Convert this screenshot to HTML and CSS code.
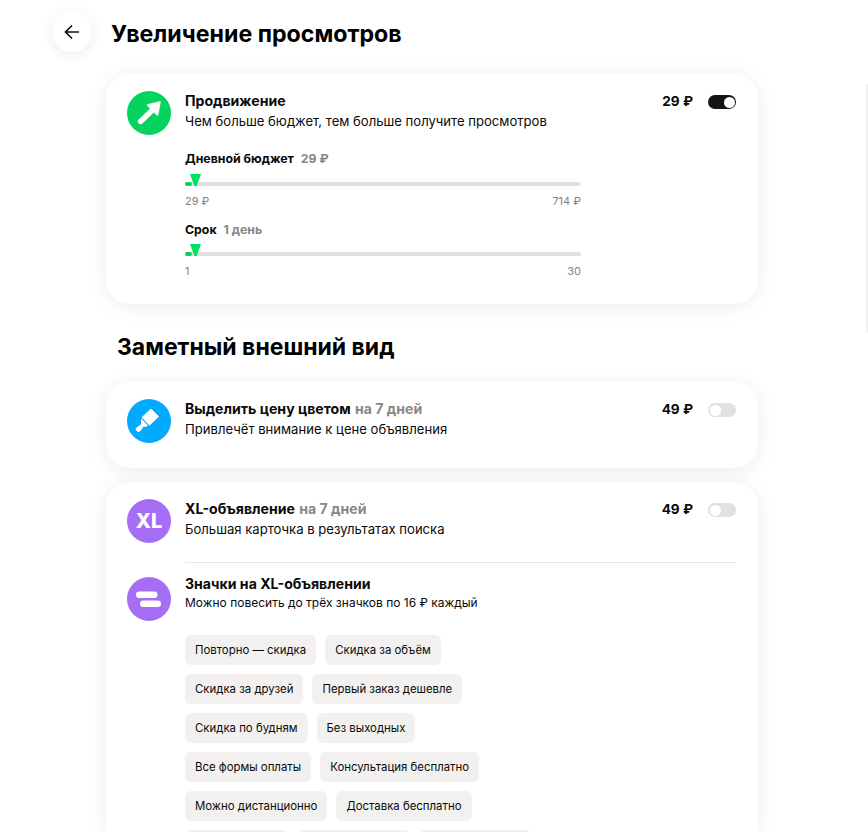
FILE: index.html
```html
<!DOCTYPE html>
<html lang="ru">
<head>
    <meta charset="utf-8">
    <title>Увеличение просмотров</title>
    <link rel="stylesheet" href="styles.css">
</head>
<body>
    <div class="next-card"></div>
    <div class="page">
        <div class="top">
            <button class="back">
                <svg width="18" height="18" viewBox="0 0 18 18" fill="none" stroke="#111" stroke-width="1.7">
                    <path d="M16 9H2.5M9 2.5L2.5 9L9 15.5"/>
                </svg>
            </button>
            <h1 class="title">Увеличение просмотров</h1>
        </div>

        <div class="card card-promo">
            <div class="row">
                <div class="icon icon-green">
                    <svg width="44" height="44" viewBox="0 0 44 44" fill="none">
                        <path d="M13.5 30.5L26 18.5" stroke="#fff" stroke-width="5.4" stroke-linecap="round"/>
                        <path d="M20.5 14L33 11L30.5 24Z" fill="#fff" stroke="#fff" stroke-width="1.5" stroke-linejoin="round"/>
                    </svg>
                </div>
                <div class="info">
                    <div class="name">Продвижение</div>
                    <div class="desc">Чем больше бюджет, тем больше получите просмотров</div>
                </div>
                <div class="price">29 ₽</div>
                <div class="toggle toggle-on"><span class="knob"></span></div>
            </div>

            <div class="slider">
                <div class="slider-label">Дневной бюджет <span class="muted slider-value">29 ₽</span></div>
                <div class="track"><span class="fill"></span><span class="thumb"></span></div>
                <div class="limits"><span>29 ₽</span><span>714 ₽</span></div>
            </div>
            <div class="slider">
                <div class="slider-label">Срок <span class="muted slider-value">1 день</span></div>
                <div class="track"><span class="fill"></span><span class="thumb"></span></div>
                <div class="limits"><span>1</span><span>30</span></div>
            </div>
        </div>

        <h2 class="subtitle">Заметный внешний вид</h2>

        <div class="card card-color">
            <div class="row">
                <div class="icon icon-blue">
                    <svg width="44" height="44" viewBox="0 0 44 44" fill="#fff">
                        <path d="M24 10L31.5 17.5L22.5 26L15 18.5Z" stroke="#fff" stroke-linejoin="round"/>
                        <path d="M14.5 20.5L20.5 26.5L18.5 27.5L16.5 27L13 32C11 33.5 8 31 9.5 29L14.5 25.5Z" stroke="#fff" stroke-linejoin="round"/>
                    </svg>
                </div>
                <div class="info">
                    <div class="name">Выделить цену цветом <span class="muted">на 7 дней</span></div>
                    <div class="desc">Привлечёт внимание к цене объявления</div>
                </div>
                <div class="price">49 ₽</div>
                <div class="toggle"><span class="knob"></span></div>
            </div>
        </div>

        <div class="card card-xl">
            <div class="row">
                <div class="icon icon-purple icon-text">XL</div>
                <div class="info">
                    <div class="name">XL-объявление <span class="muted">на 7 дней</span></div>
                    <div class="desc">Большая карточка в результатах поиска</div>
                </div>
                <div class="price">49 ₽</div>
                <div class="toggle"><span class="knob"></span></div>
            </div>
            <div class="divider"></div>
            <div class="row">
                <div class="icon icon-purple icon-low">
                    <svg width="44" height="44" viewBox="0 0 44 44" fill="#fff">
                        <rect x="9" y="14.5" width="21.5" height="6.5" rx="3.2"/>
                        <rect x="13" y="23.5" width="21" height="6.5" rx="3.2"/>
                    </svg>
                </div>
                <div class="info">
                    <div class="name">Значки на XL-объявлении</div>
                    <div class="desc desc-tight">Можно повесить до трёх значков по 16 ₽ каждый</div>
                </div>
            </div>
            <div class="chips">
                <div class="chip-row">
                    <span class="chip">Повторно — скидка</span>
                    <span class="chip">Скидка за объём</span>
                </div>
                <div class="chip-row">
                    <span class="chip">Скидка за друзей</span>
                    <span class="chip">Первый заказ дешевле</span>
                </div>
                <div class="chip-row">
                    <span class="chip">Скидка по будням</span>
                    <span class="chip">Без выходных</span>
                </div>
                <div class="chip-row">
                    <span class="chip">Все формы оплаты</span>
                    <span class="chip">Консультация бесплатно</span>
                </div>
                <div class="chip-row">
                    <span class="chip">Можно дистанционно</span>
                    <span class="chip">Доставка бесплатно</span>
                </div>
                <div class="chip-row">
                    <span class="chip chip-cut"></span>
                    <span class="chip chip-cut"></span>
                    <span class="chip chip-cut"></span>
                </div>
            </div>
        </div>
    </div>
</body>
</html>
```

FILE: styles.css
```css
html, body {
    margin: 0;
    height: 832px;
    overflow: hidden;
    background: #fff;
}
body {
    font-family: Inter, "Noto Sans", sans-serif;
    color: #0a0a0a;
    font-size: 13px;
}
.page {
    padding: 12px 0 0 52px;
}
.top {
    display: flex;
    gap: 19px;
}
.back {
    width: 40px;
    height: 40px;
    padding: 0;
    border: none;
    border-radius: 50%;
    background: #fff;
    box-shadow: 0 2px 14px rgba(0, 0, 0, 0.08);
    display: flex;
    align-items: center;
    justify-content: center;
}
.title {
    margin: 7px 0 0;
    font-size: 23.2px;
    line-height: 30px;
    font-weight: 700;
    color: #000;
}
.subtitle {
    margin: 28px 0 20px 65px;
    font-size: 23px;
    line-height: 30px;
    font-weight: 700;
    color: #000;
}
.card {
    width: 652px;
    box-sizing: border-box;
    margin-left: 54px;
    padding: 17px 22px 0 21px;
    background: #fff;
    border-radius: 24px;
    box-shadow: 0 2px 20px rgba(0, 0, 0, 0.08);
}
.card-promo {
    height: 230px;
    margin-top: 22px;
}
.card-color {
    height: 86px;
}
.card-xl {
    height: 350px;
    margin-top: 14px;
    overflow: hidden;
    border-radius: 24px 24px 0 0;
}
.row {
    display: flex;
    align-items: flex-start;
}
.icon {
    width: 44px;
    height: 44px;
    flex-shrink: 0;
    border-radius: 50%;
    margin-right: 14px;
}
.icon svg {
    display: block;
}
.icon-low {
    margin-top: 3px;
}
.icon-green { background: #04d35f; }
.icon-blue { background: #00aaff; }
.icon-purple { background: #a56ef5; }
.icon-text {
    color: #fff;
    font-size: 20px;
    font-weight: 800;
    line-height: 44px;
    text-align: center;
}
.info {
    flex: 1;
}
.name {
    font-size: 14.1px;
    line-height: 20px;
    font-weight: 700;
}
.name .muted {
    margin-left: 1px;
}
.desc {
    font-size: 13.1px;
    line-height: 20px;
}
.desc-tight {
    font-size: 12px;
    line-height: 18px;
}
.muted {
    color: #8a8784;
}
.price {
    font-size: 13.6px;
    line-height: 20px;
    font-weight: 700;
    margin-right: 15px;
}
.toggle {
    width: 28px;
    height: 14px;
    margin-top: 4px;
    box-sizing: border-box;
    padding: 1.5px;
    border-radius: 7px;
    background: #e2e1df;
    display: flex;
}
.toggle-on {
    background: #141414;
    justify-content: flex-end;
}
.knob {
    width: 11px;
    height: 11px;
    border-radius: 50%;
    background: #fff;
}
.slider {
    width: 396px;
    margin-left: 58px;
}
.row + .slider {
    margin-top: 15px;
}
.slider + .slider {
    margin-top: 12px;
}
.slider-label {
    font-size: 12.3px;
    line-height: 18px;
    font-weight: 700;
}
.slider-value {
    margin-left: 4px;
}
.track {
    position: relative;
    height: 4px;
    margin-top: 13px;
    border-radius: 2px;
    background: #e0e0e0;
}
.row + .slider .track {
    margin-top: 14px;
}
.fill {
    display: block;
    width: 7px;
    height: 4px;
    border-radius: 2px;
    background: #04d35f;
}
.thumb {
    position: absolute;
    left: 5px;
    top: -8px;
    width: 11px;
    height: 12px;
    background: #00e060;
    clip-path: polygon(0 0, 100% 0, 60% 100%, 40% 100%);
}
.limits {
    display: flex;
    justify-content: space-between;
    margin-top: 7px;
    font-size: 11px;
    line-height: 16px;
    color: #85827f;
}
.divider {
    height: 1px;
    margin: 19px 0 11px 58px;
    background: #e8e8e8;
}
.chips {
    margin: 14px 0 0 58px;
    display: flex;
    flex-direction: column;
    gap: 9px;
}
.chip-row {
    display: flex;
    gap: 9px;
}
.chip {
    height: 30px;
    padding: 0 10px;
    border-radius: 6px;
    background: #f2f1f0;
    font-size: 11.4px;
    line-height: 30px;
}
.chip-cut {
    width: 93px;
}
.chip-cut:first-child {
    width: 83px;
}
.next-card {
    position: absolute;
    right: 0;
    top: 84px;
    width: 2px;
    height: 249px;
    border-radius: 2px 0 0 2px;
    background: #f0f0f0;
}
```
